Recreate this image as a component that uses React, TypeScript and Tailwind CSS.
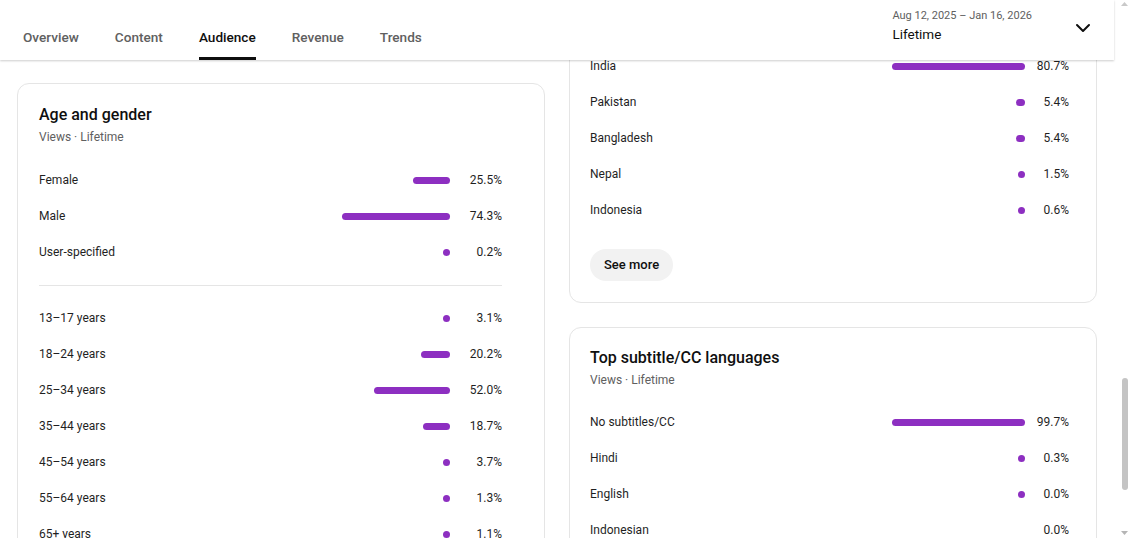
import React from "react";
import { ChevronDown } from "lucide-react";

type StatRowData = { label: string; value: string; bar: number };

const tabs = ["Overview", "Content", "Audience", "Revenue", "Trends"];

const genderRows: StatRowData[] = [
  { label: "Female", value: "25.5%", bar: 37 },
  { label: "Male", value: "74.3%", bar: 108 },
  { label: "User-specified", value: "0.2%", bar: 7 },
];

const ageRows: StatRowData[] = [
  { label: "13–17 years", value: "3.1%", bar: 7 },
  { label: "18–24 years", value: "20.2%", bar: 29 },
  { label: "25–34 years", value: "52.0%", bar: 76 },
  { label: "35–44 years", value: "18.7%", bar: 27 },
  { label: "45–54 years", value: "3.7%", bar: 7 },
  { label: "55–64 years", value: "1.3%", bar: 7 },
  { label: "65+ years", value: "1.1%", bar: 7 },
];

const countryRows: StatRowData[] = [
  { label: "India", value: "80.7%", bar: 133 },
  { label: "Pakistan", value: "5.4%", bar: 9 },
  { label: "Bangladesh", value: "5.4%", bar: 9 },
  { label: "Nepal", value: "1.5%", bar: 7 },
  { label: "Indonesia", value: "0.6%", bar: 7 },
];

const subtitleRows: StatRowData[] = [
  { label: "No subtitles/CC", value: "99.7%", bar: 133 },
  { label: "Hindi", value: "0.3%", bar: 7 },
  { label: "English", value: "0.0%", bar: 7 },
  { label: "Indonesian", value: "0.0%", bar: 0 },
];

const StatRow: React.FC<{ row: StatRowData; valueClass: string }> = ({
  row,
  valueClass,
}) => (
  <div className="flex h-9 items-center text-[12px] text-[#1f1f1f]">
    <span className="flex-1 truncate">{row.label}</span>
    {row.bar > 0 && (
      <span
        className="h-[7px] shrink-0 rounded-full bg-[#8d2fc1]"
        style={{ width: row.bar }}
      />
    )}
    <span className={`shrink-0 text-right ${valueClass}`}>{row.value}</span>
  </div>
);

const CardHeading: React.FC<{ title: string }> = ({ title }) => (
  <div>
    <h2 className="text-[16px] font-medium leading-5 text-[#0f0f0f]">
      {title}
    </h2>
    <p className="mt-1 text-[12px] leading-4 text-[#606060]">
      Views · Lifetime
    </p>
  </div>
);

const AgeGenderCard = () => (
  <div className="rounded-xl border border-[#e5e5e5] bg-white pb-5 pl-[21px] pr-[42px] pt-[21px]">
    <CardHeading title="Age and gender" />
    <div className="mt-[17px]">
      {genderRows.map((row) => (
        <StatRow key={row.label} row={row} valueClass="w-[52px]" />
      ))}
    </div>
    <div className="mb-[14px] mt-[15px] h-px bg-[#e5e5e5]" />
    <div>
      {ageRows.map((row) => (
        <StatRow key={row.label} row={row} valueClass="w-[52px]" />
      ))}
    </div>
  </div>
);

const GeographyCard = () => (
  <div className="rounded-xl border border-[#e5e5e5] bg-white pb-[21px] pl-[20px] pr-[27px] pt-[19px]">
    <CardHeading title="Top geographies" />
    <div className="mt-[17px]">
      {countryRows.map((row) => (
        <StatRow key={row.label} row={row} valueClass="w-[44px]" />
      ))}
    </div>
    <button className="mt-[21px] h-8 rounded-full bg-[#f2f2f2] px-[14px] text-[13px] font-medium text-[#0f0f0f]">
      See more
    </button>
  </div>
);

const SubtitleCard = () => (
  <div className="rounded-xl border border-[#e5e5e5] bg-white pb-5 pl-[20px] pr-[27px] pt-[20px]">
    <CardHeading title="Top subtitle/CC languages" />
    <div className="mt-[16px]">
      {subtitleRows.map((row) => (
        <StatRow key={row.label} row={row} valueClass="w-[44px]" />
      ))}
    </div>
  </div>
);

const Scrollbar = () => (
  <div className="flex w-[15px] shrink-0 flex-col items-end bg-white pr-[1px]">
    <svg width="7" height="4" className="mt-[2px]">
      <path d="M0 4 L3.5 0 L7 4 Z" fill="#c9c9c9" />
    </svg>
    <div className="mt-[372px] h-[112px] w-[6px] rounded-full bg-[#c4c4c4]" />
    <svg width="7" height="4" className="mb-[3px] mt-auto">
      <path d="M0 0 L3.5 4 L7 0 Z" fill="#b5b5b5" />
    </svg>
  </div>
);

export default function App() {
  return (
    <div className="flex h-[538px] w-full overflow-hidden bg-white font-['Roboto','Noto_Sans',sans-serif]">
      <div className="flex min-w-0 flex-1 flex-col">
        <header className="relative z-10 flex h-[60px] shrink-0 justify-between bg-white shadow-[0_1px_2px_rgba(0,0,0,0.2)]">
          <nav className="flex h-full gap-9 pl-[23px]">
            {tabs.map((tab) => (
              <div
                key={tab}
                className={`flex h-full items-center border-b-[3px] pt-[17px] text-[13.6px] font-medium ${
                  tab === "Audience"
                    ? "border-[#0f0f0f] text-[#0f0f0f]"
                    : "border-transparent text-[#606060]"
                }`}
              >
                {tab}
              </div>
            ))}
          </nav>
          <div className="flex items-start pr-[19px] pt-2">
            <div className="flex flex-col">
              <span className="text-[11px] leading-4 text-[#606060]">
                Aug 12, 2025 – Jan 16, 2026
              </span>
              <span className="text-[13.5px] leading-5 text-[#0f0f0f]">
                Lifetime
              </span>
            </div>
            <ChevronDown
              size={24}
              strokeWidth={2}
              className="ml-[39px] mt-[8px] text-[#0f0f0f]"
            />
          </div>
        </header>

        <main className="flex-1 overflow-hidden">
          <div className="mt-[-89px] grid grid-cols-2 gap-6 px-[17px]">
            <div className="flex flex-col gap-6">
              <div className="h-[88px] rounded-xl border border-[#e5e5e5] bg-white" />
              <AgeGenderCard />
            </div>
            <div className="flex flex-col gap-6">
              <GeographyCard />
              <SubtitleCard />
            </div>
          </div>
        </main>
      </div>
      <Scrollbar />
    </div>
  );
}
